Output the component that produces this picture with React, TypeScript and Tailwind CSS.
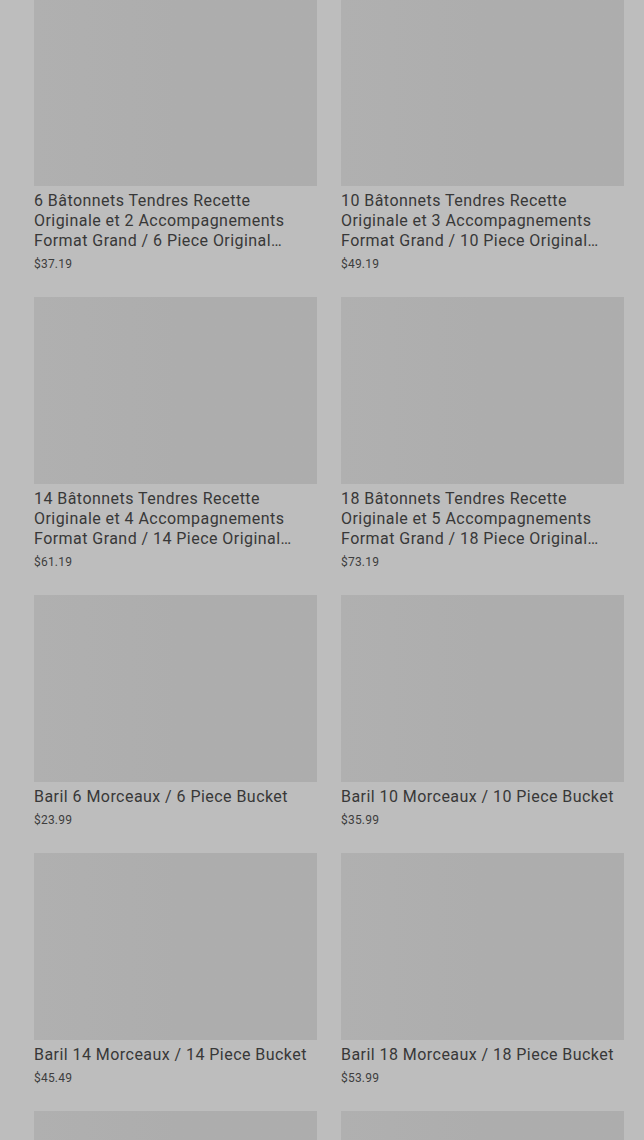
const products = [
  { name: '6 Bâtonnets Tendres Recette Originale et 2 Accompagnements Format Grand / 6 Piece Original Recipe Tenders & 2 Large Sides', price: '$37.19' },
  { name: '10 Bâtonnets Tendres Recette Originale et 3 Accompagnements Format Grand / 10 Piece Original Recipe Tenders & 3 Large Sides', price: '$49.19' },
  { name: '14 Bâtonnets Tendres Recette Originale et 4 Accompagnements Format Grand / 14 Piece Original Recipe Tenders & 4 Large Sides', price: '$61.19' },
  { name: '18 Bâtonnets Tendres Recette Originale et 5 Accompagnements Format Grand / 18 Piece Original Recipe Tenders & 5 Large Sides', price: '$73.19' },
  { name: 'Baril 6 Morceaux / 6 Piece Bucket', price: '$23.99' },
  { name: 'Baril 10 Morceaux / 10 Piece Bucket', price: '$35.99' },
  { name: 'Baril 14 Morceaux / 14 Piece Bucket', price: '$45.49' },
  { name: 'Baril 18 Morceaux / 18 Piece Bucket', price: '$53.99' },
  { name: 'Repas Baril 6 Morceaux / 6 Piece Bucket Meal', price: '$33.99' },
  { name: 'Repas Baril 10 Morceaux / 10 Piece Bucket Meal', price: '$47.99' },
];

function ProductCard({ name, price }: { name: string; price: string }) {
  return (
    <div className="flex flex-col">
      <div className="h-[187px] w-full bg-gradient-to-r from-[#b0b0b0] via-[#adadad] to-[#adadad]" />
      <h3 className="mt-[5px] text-[16px] leading-[20px] tracking-[0.45px] text-[#383838] line-clamp-3">
        {name}
      </h3>
      <p className="mt-[5px] text-[12px] leading-[16px] tracking-[0.2px] text-[#3e3e3e]">{price}</p>
    </div>
  );
}

export default function App() {
  return (
    <div
      className="h-[1140px] overflow-hidden bg-[#bdbdbd]"
      style={{ fontFamily: 'Roboto, "Noto Sans", sans-serif' }}
    >
      <div className="-mt-px grid grid-cols-2 gap-x-6 gap-y-[25px] pl-[34px] pr-5">
        {products.map((p, idx) => (
          <ProductCard key={idx} name={p.name} price={p.price} />
        ))}
      </div>
    </div>
  );
}
